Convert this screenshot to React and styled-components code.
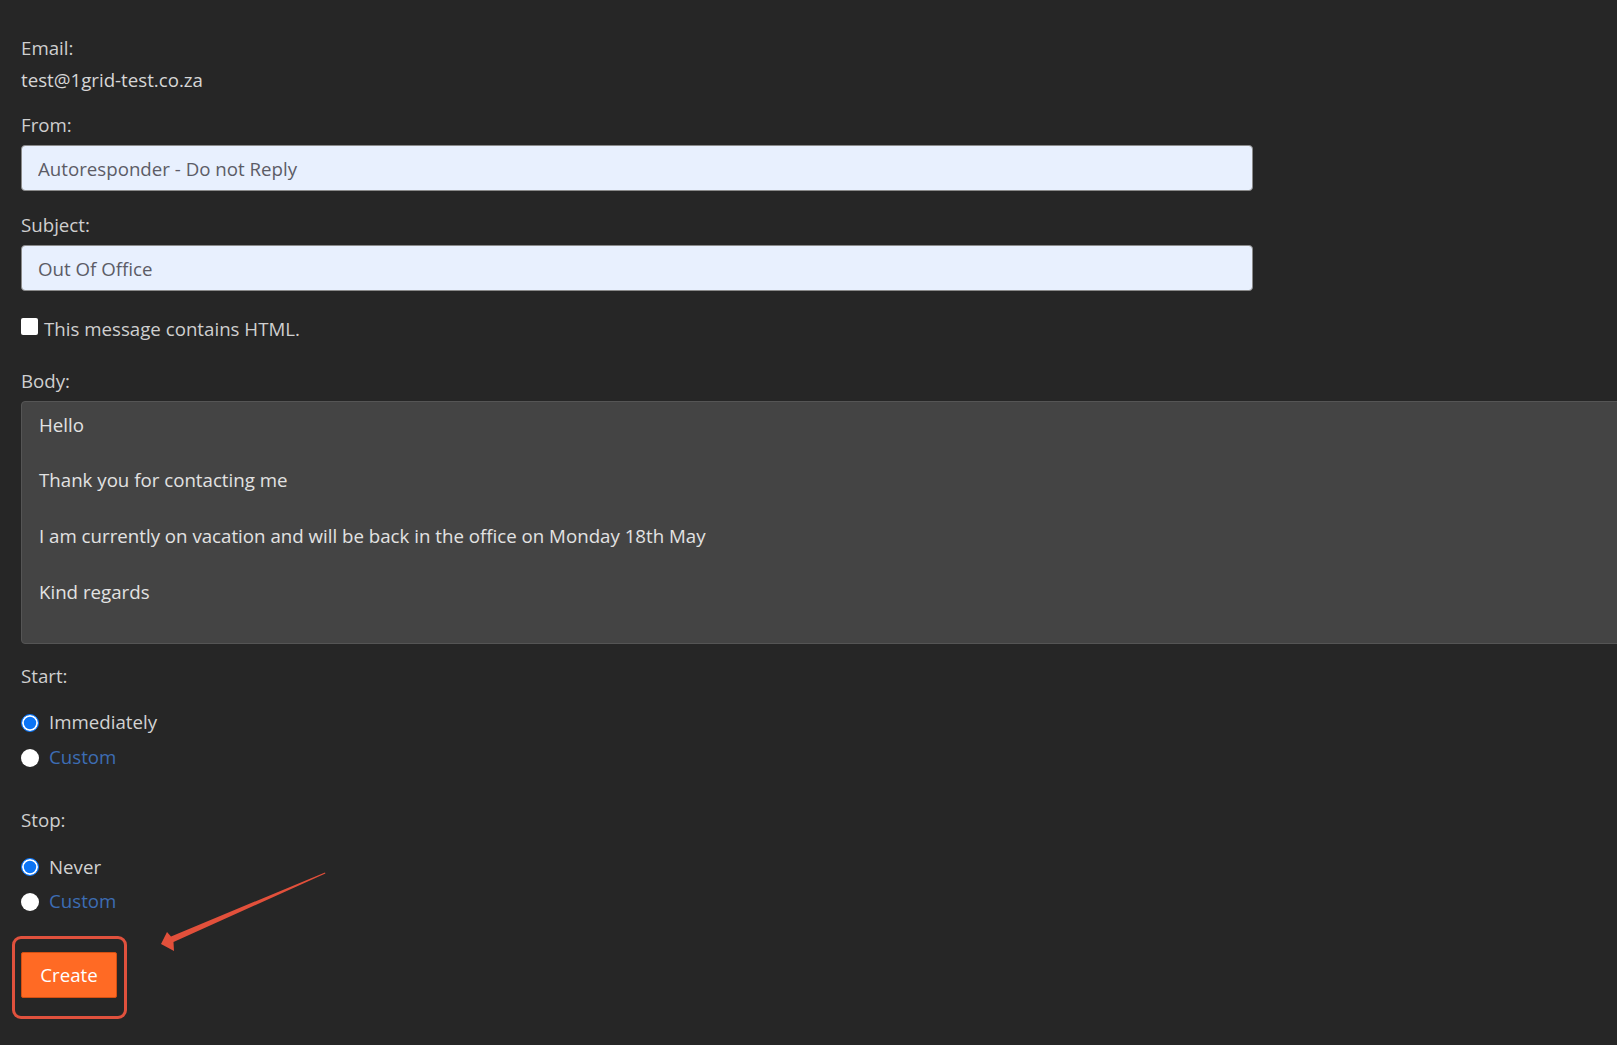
import React from 'react';
import styled, { createGlobalStyle } from 'styled-components';

const GlobalStyle = createGlobalStyle`
  html, body {
    margin: 0;
    padding: 0;
    background: #262626;
    overflow: hidden;
  }
  body {
    font-family: "Open Sans", "Noto Sans", sans-serif;
    font-size: 18.7px;
    line-height: 27.75px;
    color: #d2d2d2;
  }
`;

const Page = styled.form`
  padding: 34px 0 40px 21px;
  display: flex;
  flex-direction: column;
  align-items: flex-start;
`;

const Label = styled.label`
  display: block;
  margin-top: ${p => p.$gap || 0}px;
  color: #cfcfcf;
`;

const Value = styled.div`
  margin-top: 4px;
  color: #d6d6d6;
`;

const TextInput = styled.input`
  box-sizing: border-box;
  width: 1232px;
  height: 46px;
  margin-top: ${p => p.$gap || 0}px;
  padding: 0 16px;
  border: 1px solid #8a8a8a;
  border-radius: 4px;
  background: #e8f0fe;
  color: #5c5c66;
  font: inherit;
  outline: none;
`;

const CheckRow = styled.label`
  display: flex;
  align-items: center;
  gap: 6px;
  margin-top: 24px;
  color: #cfcfcf;
`;

const Box = styled.input`
  appearance: none;
  margin: 0;
  width: 17px;
  height: 17px;
  border-radius: 2px;
  background: #fff;
  position: relative;
  top: -2px;
`;

const BodyArea = styled.textarea`
  box-sizing: border-box;
  width: 1680px;
  height: 243px;
  margin-top: 6px;
  padding: 9px 17px;
  border: 1px solid #555;
  border-radius: 4px;
  background: #444;
  color: #e2e2e2;
  font: inherit;
  line-height: 27.85px;
  resize: none;
  overflow: hidden;
  outline: none;
`;

const RadioGroup = styled.div`
  display: flex;
  flex-direction: column;
  gap: ${p => p.$gap}px;
  margin-top: ${p => p.$top}px;
`;

const RadioRow = styled.label`
  display: flex;
  align-items: center;
  gap: 10px;
  color: ${p => (p.$link ? '#3d6db4' : '#d2d2d2')};
`;

const Radio = styled.input`
  appearance: none;
  margin: 0;
  width: 18px;
  height: 18px;
  border-radius: 50%;
  background: #fff;
  box-sizing: border-box;
  position: relative;
  top: 1px;
  &:checked {
    background: #0b74f5;
    border: 1.5px solid #0b74f5;
    box-shadow: inset 0 0 0 1.8px #fff;
  }
`;

const ActionWrap = styled.div`
  position: relative;
  margin-top: 37px;
`;

const Button = styled.button`
  width: 96px;
  height: 46px;
  background: #ff6a24;
  border: 1px solid #d24f12;
  border-radius: 2px;
  color: #fff;
  font: inherit;
  cursor: pointer;
`;

const Highlight = styled.div`
  position: absolute;
  left: -9px;
  top: -16px;
  width: 115px;
  height: 83px;
  box-sizing: border-box;
  border: 3px solid #e0513d;
  border-radius: 9px;
  pointer-events: none;
`;

const Arrow = styled.svg`
  position: absolute;
  left: 134px;
  top: -86px;
  overflow: visible;
`;

const bodyText =
  'Hello\n\nThank you for contacting me\n\nI am currently on vacation and will be back in the office on Monday 18th May\n\nKind regards';

export default function App() {
  return (
    <>
      <GlobalStyle />
      <Page onSubmit={e => e.preventDefault()}>
        <Label>Email:</Label>
        <Value>test@1grid-test.co.za</Value>

        <Label $gap={17}>From:</Label>
        <TextInput $gap={7} defaultValue="Autoresponder - Do not Reply" />

        <Label $gap={20}>Subject:</Label>
        <TextInput $gap={6} defaultValue="Out Of Office" />

        <CheckRow>
          <Box type="checkbox" />
          This message contains HTML.
        </CheckRow>

        <Label $gap={24}>Body:</Label>
        <BodyArea defaultValue={bodyText} />

        <Label $gap={18}>Start:</Label>
        <RadioGroup $top={19} $gap={7}>
          <RadioRow>
            <Radio type="radio" name="start" defaultChecked />
            Immediately
          </RadioRow>
          <RadioRow $link>
            <Radio type="radio" name="start" />
            Custom
          </RadioRow>
        </RadioGroup>

        <Label $gap={35}>Stop:</Label>
        <RadioGroup $top={19} $gap={7}>
          <RadioRow>
            <Radio type="radio" name="stop" defaultChecked />
            Never
          </RadioRow>
          <RadioRow $link>
            <Radio type="radio" name="stop" />
            Custom
          </RadioRow>
        </RadioGroup>

        <ActionWrap>
          <Button type="submit">Create</Button>
          <Highlight />
          <Arrow width="180" height="90" viewBox="0 0 180 90">
            <polygon
              points="6,78 12,66 16,70.4 170,6.4 170.4,7.6 18.5,76 19,85"
              fill="#e2503b"
            />
          </Arrow>
        </ActionWrap>
      </Page>
    </>
  );
}
